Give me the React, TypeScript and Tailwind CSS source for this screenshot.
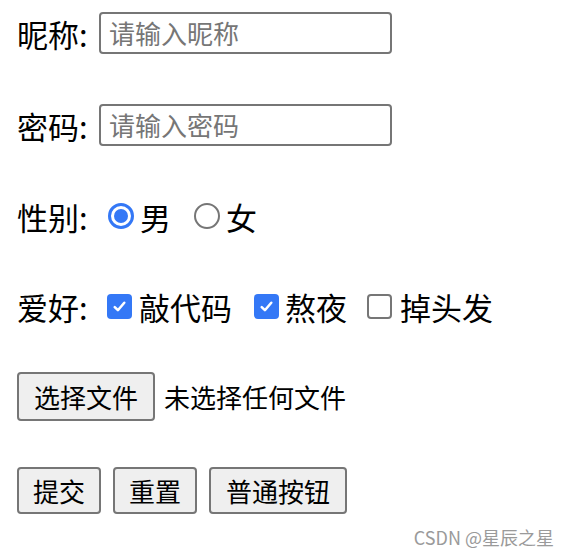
import React from 'react';

const font = { fontFamily: '"Noto Sans CJK SC", "Noto Sans", sans-serif' };

const Radio: React.FC<{ checked?: boolean }> = ({ checked }) =>
  checked ? (
    <span className="flex h-[26px] w-[26px] items-center justify-center rounded-full border-[3px] border-[#3478f6] bg-white">
      <span className="h-[14px] w-[14px] rounded-full bg-[#3478f6]" />
    </span>
  ) : (
    <span className="block h-[26px] w-[26px] rounded-full border-2 border-[#767676] bg-white" />
  );

const Checkbox: React.FC<{ checked?: boolean }> = ({ checked }) =>
  checked ? (
    <span className="flex h-[25px] w-[25px] items-center justify-center rounded-[4px] bg-[#3478f6]">
      <svg viewBox="0 0 16 16" className="h-[17px] w-[17px]">
        <path d="M3.5 8.5l3 3 6-7" fill="none" stroke="white" strokeWidth="2.4" strokeLinecap="round" strokeLinejoin="round" />
      </svg>
    </span>
  ) : (
    <span className="block h-[25px] w-[25px] rounded-[4px] border-2 border-[#767676] bg-white" />
  );

const Btn: React.FC<{ children: React.ReactNode; w: string }> = ({ children, w }) => (
  <button className={`flex h-full items-center justify-center rounded-[4px] border-2 border-[#767676] bg-[#efefef] text-[26px] text-black ${w}`}>
    {children}
  </button>
);

export default function App() {
  return (
    <div className="relative h-[556px] w-[568px] bg-white pl-[17px] pt-[12px] text-[31px] leading-none text-black" style={font}>
      <div className="flex h-[42px] items-center">
        <span className="w-[82px]">昵称:</span>
        <div className="flex h-full w-[293px] items-center rounded-[4px] border-2 border-[#767676] px-[8px] text-[26px] text-[#767676]">
          请输入昵称
        </div>
      </div>
      <div className="mt-[50px] flex h-[42px] items-center">
        <span className="w-[82px]">密码:</span>
        <div className="flex h-full w-[293px] items-center rounded-[4px] border-2 border-[#767676] px-[8px] text-[26px] text-[#767676]">
          请输入密码
        </div>
      </div>
      <div className="mt-[55px] flex h-[30px] items-center">
        <span className="w-[91px]">性别:</span>
        <Radio checked />
        <span className="ml-[6px]">男</span>
        <span className="ml-[23px]"><Radio /></span>
        <span className="ml-[6px]">女</span>
      </div>
      <div className="mt-[60px] flex h-[30px] items-center">
        <span className="w-[90px]">爱好:</span>
        <Checkbox checked />
        <span className="ml-[7px]">敲代码</span>
        <span className="ml-[22px]"><Checkbox checked /></span>
        <span className="ml-[6px]">熬夜</span>
        <span className="ml-[20px]"><Checkbox /></span>
        <span className="ml-[8px]">掉头发</span>
      </div>
      <div className="mt-[51px] flex h-[49px] items-center">
        <Btn w="w-[138px]">选择文件</Btn>
        <span className="ml-[9px] text-[26px]">未选择任何文件</span>
      </div>
      <div className="mt-[46px] flex h-[47px] items-center gap-[12px]">
        <Btn w="w-[84px]">提交</Btn>
        <Btn w="w-[84px]">重置</Btn>
        <Btn w="w-[138px]">普通按钮</Btn>
      </div>
      <div className="absolute bottom-[10px] right-[14px] text-[18px] text-[#9a9a9a]">CSDN @星辰之星</div>
    </div>
  );
}
